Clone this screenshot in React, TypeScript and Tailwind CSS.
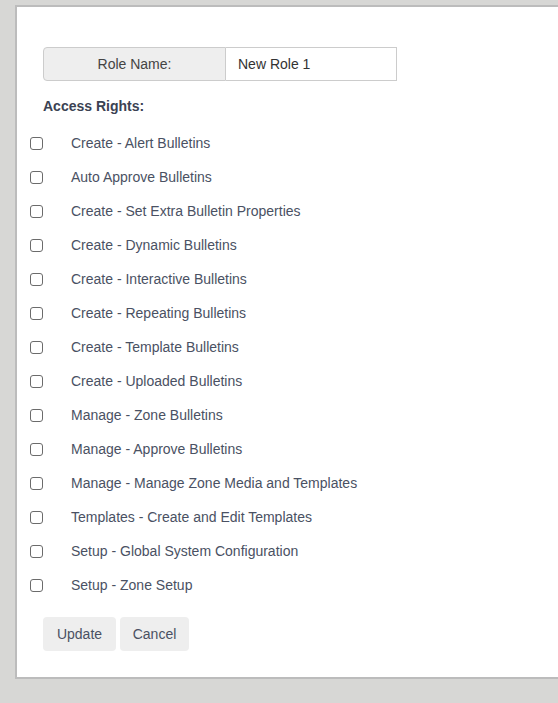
import React from 'react'

const rights = [
  'Create - Alert Bulletins',
  'Auto Approve Bulletins',
  'Create - Set Extra Bulletin Properties',
  'Create - Dynamic Bulletins',
  'Create - Interactive Bulletins',
  'Create - Repeating Bulletins',
  'Create - Template Bulletins',
  'Create - Uploaded Bulletins',
  'Manage - Zone Bulletins',
  'Manage - Approve Bulletins',
  'Manage - Manage Zone Media and Templates',
  'Templates - Create and Edit Templates',
  'Setup - Global System Configuration',
  'Setup - Zone Setup',
]

const App: React.FC = () => {
  return (
    <div
      className="w-[558px] h-[703px] overflow-hidden bg-[#d7d7d5] pt-[5px] pl-[15px]"
      style={{ fontFamily: '"Liberation Sans", Arial, sans-serif' }}
    >
      <div className="w-[600px] bg-white border-2 border-[#bcbcbc] pt-[40px] pb-[26px] pl-[13px] text-[14px] text-[#4a5163]">
        <div className="ml-[13px] flex w-[354px] h-[34px]">
          <div className="w-[183px] shrink-0 flex items-center justify-center bg-[#eeeeee] border border-[#cccccc] rounded-l-[4px] text-[#444]">
            Role Name:
          </div>
          <input
            className="w-[171px] shrink-0 border border-l-0 border-[#cccccc] px-[12px] text-[#333] outline-none"
            defaultValue="New Role 1"
          />
        </div>
        <div className="ml-[13px] mt-[15px] h-[20px] leading-[20px] font-bold text-[#3b4253]">
          Access Rights:
        </div>
        <ul className="mt-[10px]">
          {rights.map((right) => (
            <li key={right} className="h-[34px] flex items-center gap-[28px]">
              <input
                type="checkbox"
                className="appearance-none w-[13px] h-[13px] border border-[#6b6b6b] rounded-[3px] bg-white"
              />
              <span>{right}</span>
            </li>
          ))}
        </ul>
        <div className="ml-[13px] mt-[15px] flex gap-[4px]">
          <button className="w-[73px] h-[34px] bg-[#eeeeee] rounded-[4px] text-[#4a5163]">Update</button>
          <button className="w-[69px] h-[34px] bg-[#eeeeee] rounded-[4px] text-[#4a5163]">Cancel</button>
        </div>
      </div>
    </div>
  )
}

export default App
